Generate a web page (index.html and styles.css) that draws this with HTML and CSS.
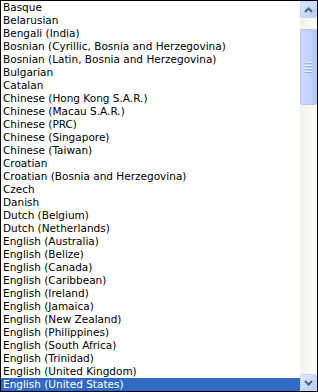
FILE: index.html
```html
<!DOCTYPE html>
<html lang="en">
<head>
    <meta charset="UTF-8">
    <title>Language list</title>
    <link rel="stylesheet" href="styles.css">
</head>
<body>
    <div class="listbox">
        <ul class="items">
            <li>Basque</li>
            <li>Belarusian</li>
            <li>Bengali (India)</li>
            <li>Bosnian (Cyrillic, Bosnia and Herzegovina)</li>
            <li>Bosnian (Latin, Bosnia and Herzegovina)</li>
            <li>Bulgarian</li>
            <li>Catalan</li>
            <li>Chinese (Hong Kong S.A.R.)</li>
            <li>Chinese (Macau S.A.R.)</li>
            <li>Chinese (PRC)</li>
            <li>Chinese (Singapore)</li>
            <li>Chinese (Taiwan)</li>
            <li>Croatian</li>
            <li>Croatian (Bosnia and Herzegovina)</li>
            <li>Czech</li>
            <li>Danish</li>
            <li>Dutch (Belgium)</li>
            <li>Dutch (Netherlands)</li>
            <li>English (Australia)</li>
            <li>English (Belize)</li>
            <li>English (Canada)</li>
            <li>English (Caribbean)</li>
            <li>English (Ireland)</li>
            <li>English (Jamaica)</li>
            <li>English (New Zealand)</li>
            <li>English (Philippines)</li>
            <li>English (South Africa)</li>
            <li>English (Trinidad)</li>
            <li>English (United Kingdom)</li>
            <li class="selected">English (United States)</li>
        </ul>
        <div class="scrollbar">
            <div class="btn">
                <svg width="9" height="6" viewBox="0 0 9 6"><path d="M1 5 L4.5 1.5 L8 5" fill="none" stroke="#4d6185" stroke-width="2"/></svg>
            </div>
            <div class="track">
                <div class="gap-top"></div>
                <div class="thumb">
                    <div class="grip"><span></span><span></span><span></span><span></span></div>
                </div>
                <div class="gap-bottom"></div>
            </div>
            <div class="btn">
                <svg width="9" height="6" viewBox="0 0 9 6"><path d="M1 1 L4.5 4.5 L8 1" fill="none" stroke="#4d6185" stroke-width="2"/></svg>
            </div>
        </div>
    </div>
</body>
</html>
```
FILE: styles.css
```css
body {
    margin: 0;
    padding: 0;
    background-color: #fff;
}

.listbox {
    width: 318px;
    height: 392px;
    box-sizing: border-box;
    border: 1px solid #000;
    display: flex;
    overflow: hidden;
}

.items {
    flex: 1;
    margin: 0;
    padding: 0;
    list-style: none;
    font-family: "DejaVu Sans", sans-serif;
    font-size: 10.5px;
    color: #000;
}

.items li {
    height: 13px;
    line-height: 13px;
    padding-left: 2px;
    white-space: nowrap;
}

.items li.selected {
    background-color: #316ac5;
    color: #fff;
}

.scrollbar {
    width: 17px;
    display: flex;
    flex-direction: column;
    background: linear-gradient(to right, #f3f1ea, #fefefb);
}

.btn {
    height: 17px;
    box-sizing: border-box;
    border: 1px solid #c6d5fb;
    border-radius: 2px;
    background: linear-gradient(135deg, #dfe9ff, #b8cbf8);
    display: flex;
    align-items: center;
    justify-content: center;
}

.track {
    flex: 1;
    display: flex;
    flex-direction: column;
}

.gap-top {
    height: 11px;
}

.gap-bottom {
    flex: 1;
}

.thumb {
    height: 76px;
    box-sizing: border-box;
    border: 1px solid #b4c6f5;
    border-radius: 2px;
    background: linear-gradient(to right, #cddafc, #c2d3fc 60%, #b5c8f7);
    display: flex;
    align-items: center;
    justify-content: center;
}

.grip {
    display: flex;
    flex-direction: column;
    gap: 1px;
}

.grip span {
    display: block;
    width: 7px;
    height: 1px;
    background-color: #eef4fe;
    border-bottom: 1px solid #8cb0f8;
}
```
